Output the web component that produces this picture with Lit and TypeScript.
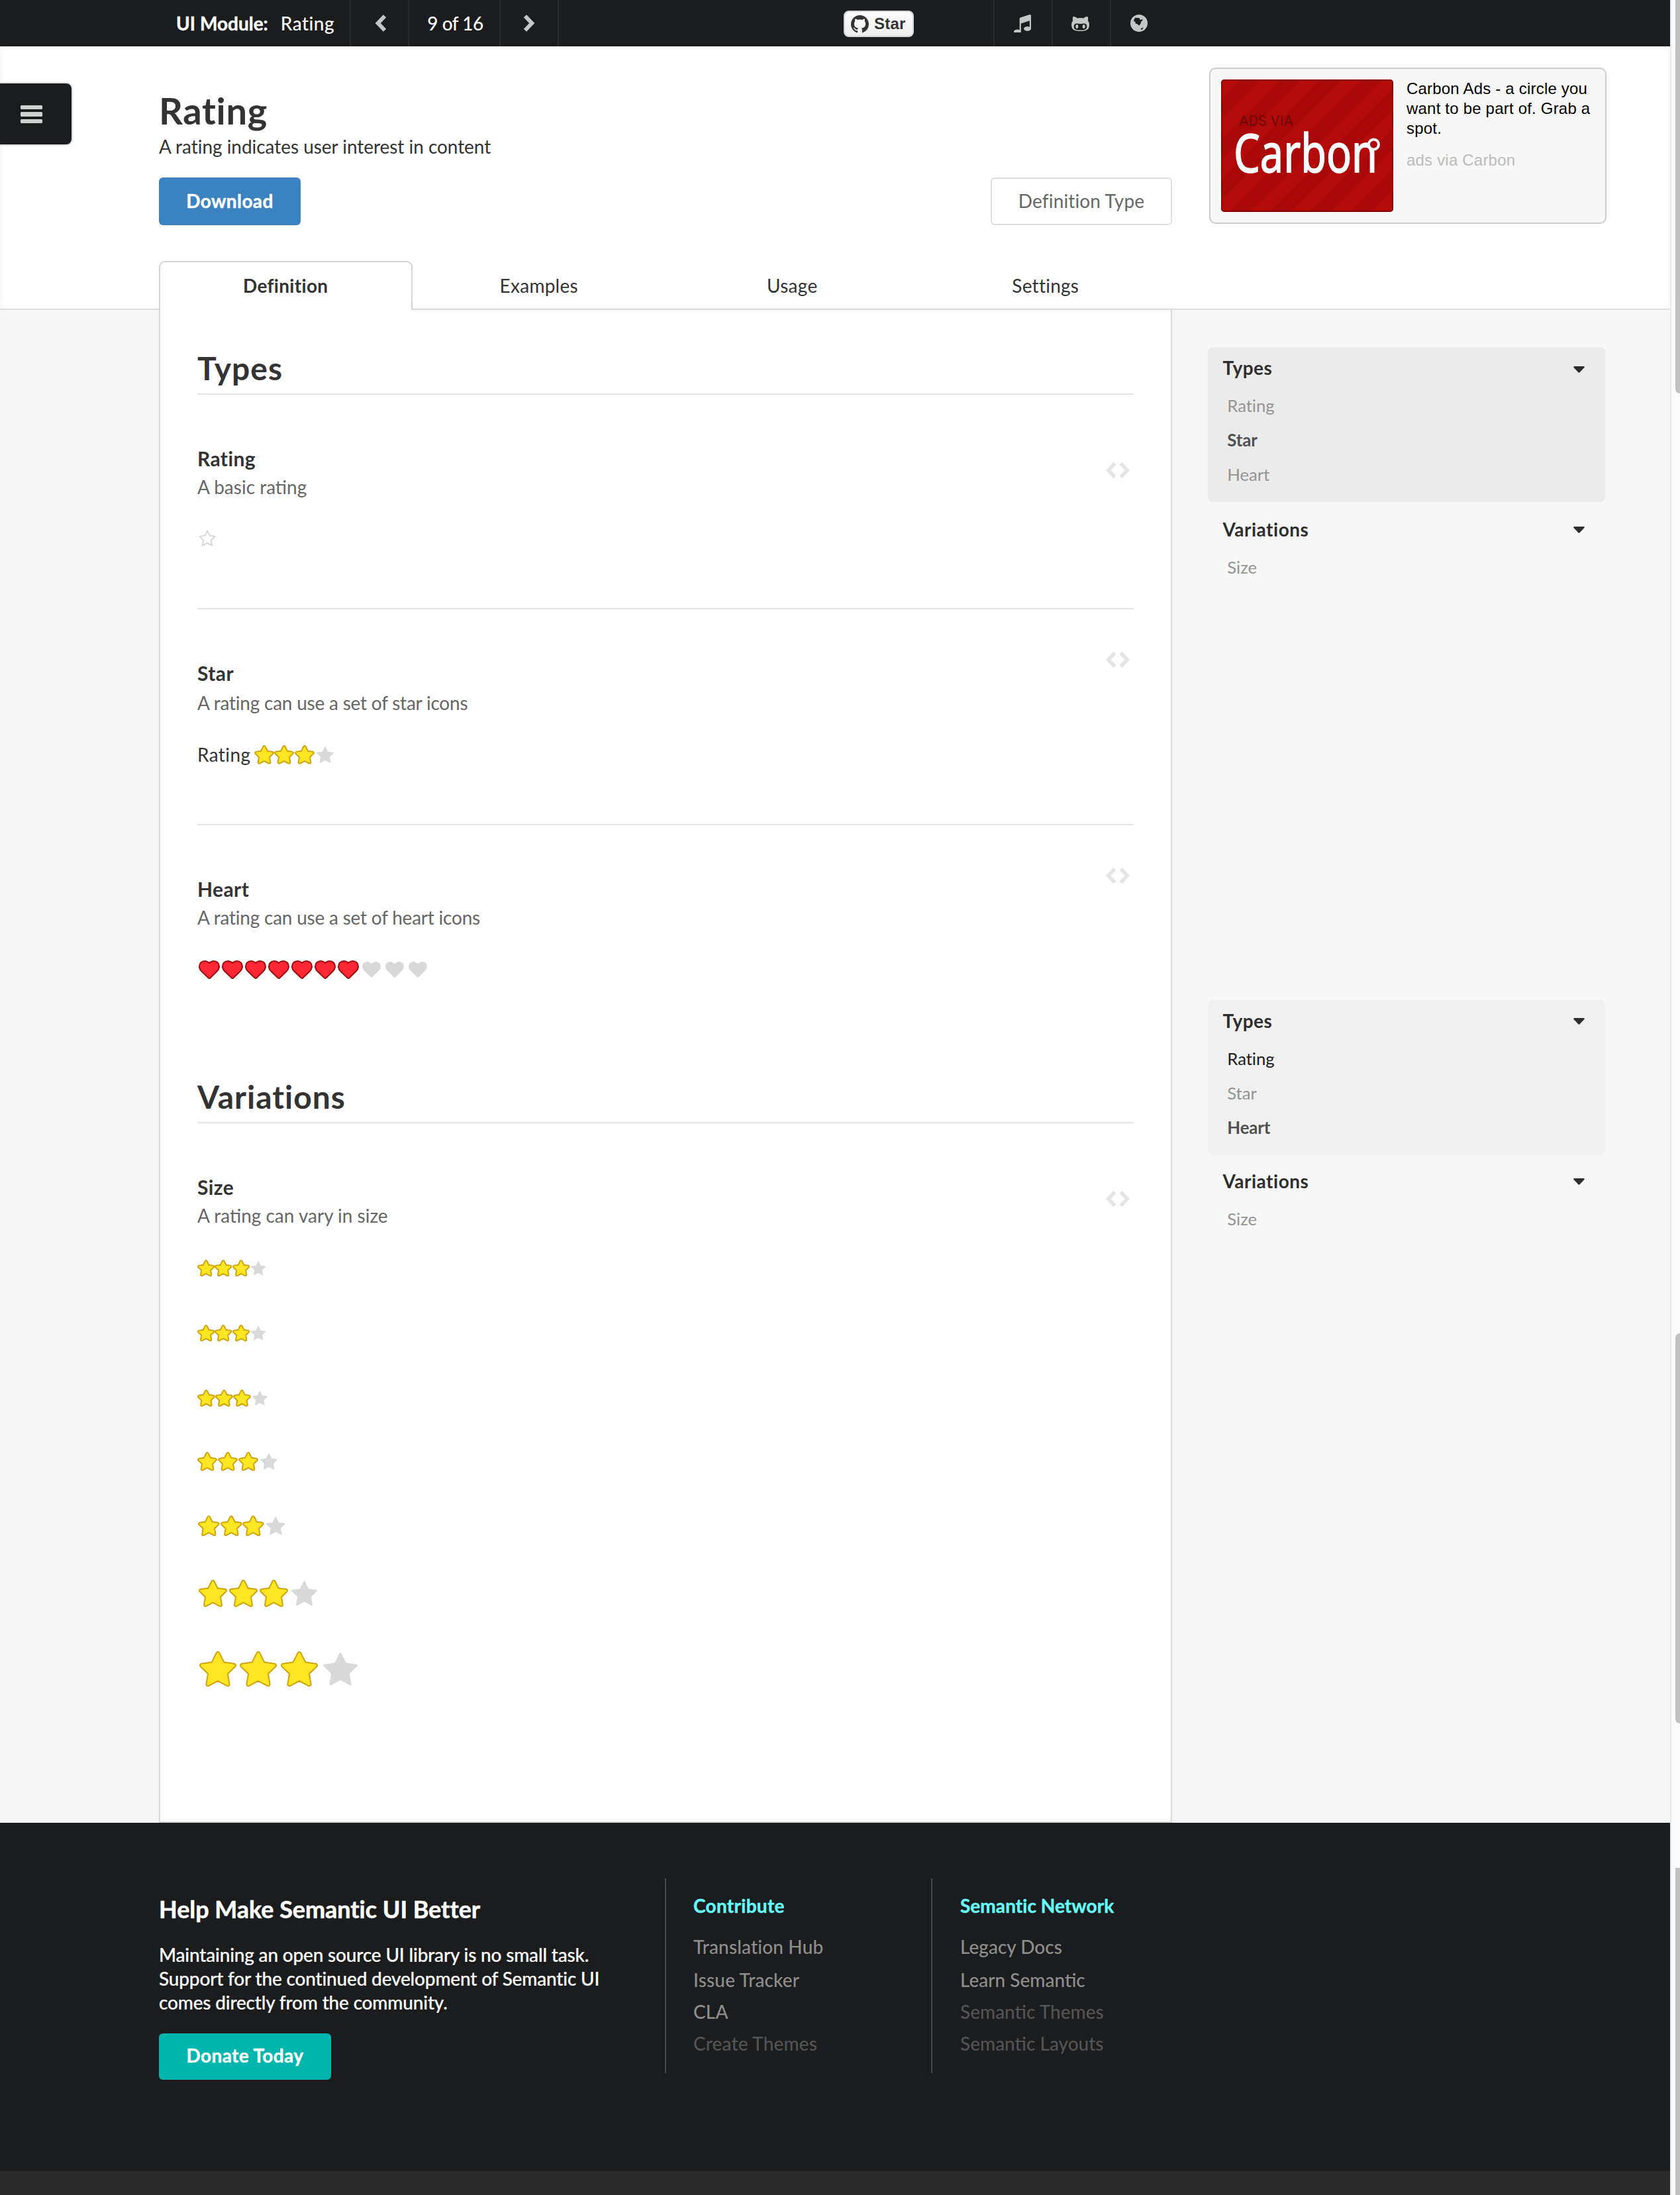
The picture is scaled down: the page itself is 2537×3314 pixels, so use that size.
import { LitElement, html, svg, css } from "lit";
import { customElement, property } from "lit/decorators.js";
import { classMap } from "lit/directives/class-map.js";
import { styleMap } from "lit/directives/style-map.js";

const STAR =
  "M1728 647q0 22-26 48l-363 354 86 500q1 7 1 20 0 21-10.5 35.5t-30.5 14.5q-19 0-40-12l-449-236-449 236q-22 12-40 12-21 0-31.5-14.5t-10.5-35.5q0-6 2-20l86-500-364-354q-25-27-25-48 0-37 56-46l502-73 225-455q19-41 49-41t49 41l225 455 502 73q56 9 56 46z";
const STAR_OUTLINE =
  "M1201 1004l306-297-422-62-189-382-189 382-422 62 306 297-73 421 378-199 377 199zm527-357q0 22-26 48l-363 354 86 500q1 7 1 20 0 50-41 50-19 0-40-12l-449-236-449 236q-22 12-40 12-21 0-31.5-14.5t-10.5-35.5q0-6 2-20l86-500-364-354q-25-27-25-48 0-37 56-46l502-73 225-455q19-41 49-41t49 41l225 455 502 73q56 9 56 46z";
const HEART =
  "M896 1664q-26 0-44-18l-624-602q-10-8-27.5-26t-55.5-65.5-68-97.5-53.5-121-23.5-138q0-220 127-344t351-124q62 0 126.5 21.5t120 58 95.5 68.5 76 68q36-36 76-68t95.5-68.5 120-58 126.5-21.5q224 0 351 124t127 344q0 221-229 450l-623 600q-18 18-44 18z";
const MUSIC =
  "M1664 224v1120q0 50-34 89t-86 60.5-103.5 32-96.5 10.5-96.5-10.5-103.5-32-86-60.5-34-89 34-89 86-60.5 103.5-32 96.5-10.5q105 0 192 39v-537l-768 237v709q0 50-34 89t-86 60.5-103.5 32-96.5 10.5-96.5-10.5-103.5-32-86-60.5-34-89 34-89 86-60.5 103.5-32 96.5-10.5q105 0 192 39v-967q0-31 19-56.5t49-35.5l832-256q12-4 28-4 40 0 68 28t28 68z";
const GITHUB_ALT =
  "M704 1216q0 40-12.5 82t-43 76-72.5 34-72.5-34-43-76-12.5-82 12.5-82 43-76 72.5-34 72.5 34 43 76 12.5 82zm640 0q0 40-12.5 82t-43 76-72.5 34-72.5-34-43-76-12.5-82 12.5-82 43-76 72.5-34 72.5 34 43 76 12.5 82zm160 0q0-120-69-204t-187-84q-41 0-195 21-71 11-157 11t-157-11q-152-21-195-21-118 0-187 84t-69 204q0 88 32 153.5t81 103 122 60 140 29.5 149 7h168q82 0 149-7t140-29.5 122-60 81-103 32-153.5zm224-176q0 207-61 331-38 77-105.5 133t-141 86-170 47.5-171.5 22-167 4.5q-78 0-142-3t-147.5-12.5-152.5-30-137-51.5-121-81-86-115q-62-123-62-331 0-237 136-396-27-82-27-170 0-116 51-218 108 0 190 39.5t189 123.5q147-35 309-35 148 0 280 32 105-82 187-121t189-39q51 102 51 218 0 87-27 168 136 160 136 398z";
const GITHUB_MARK =
  "M8 0C3.58 0 0 3.58 0 8c0 3.54 2.29 6.53 5.47 7.59.4.07.55-.17.55-.38 0-.19-.01-.82-.01-1.49-2.01.37-2.53-.49-2.69-.94-.09-.23-.48-.94-.82-1.13-.28-.15-.68-.52-.01-.53.63-.01 1.08.58 1.23.82.72 1.21 1.87.87 2.33.66.07-.52.28-.87.51-1.07-1.78-.2-3.64-.89-3.64-3.95 0-.87.31-1.59.82-2.15-.08-.2-.36-1.02.08-2.12 0 0 .67-.21 2.2.82.64-.18 1.32-.27 2-.27s1.36.09 2 .27c1.53-1.04 2.2-.82 2.2-.82.44 1.1.16 1.92.08 2.12.51.56.82 1.27.82 2.15 0 3.07-1.87 3.75-3.65 3.95.29.25.54.73.54 1.48 0 1.07-.01 1.93-.01 2.2 0 .21.15.46.55.38A8.01 8.01 0 0 0 16 8c0-4.42-3.58-8-8-8z";

/* A row of star or heart icons; cell pitch and glyph width follow the icon size. */
@customElement("ui-rating")
export class UiRating extends LitElement {
  @property() kind: "star" | "outline" | "heart" = "star";
  @property({ type: Number }) size = 28;
  @property({ type: Number }) value = 0;
  @property({ type: Number }) max = 1;

  static styles = css`
    :host {
      display: flex;
      align-items: center;
    }
    .cell {
      display: flex;
      justify-content: center;
      align-items: center;
      flex: none;
    }
    svg {
      display: block;
      overflow: visible;
      flex: none;
    }
    path {
      fill: #d9d9d9;
    }
    .on path {
      paint-order: stroke;
      stroke-width: 4px;
      stroke-linejoin: round;
      vector-effect: non-scaling-stroke;
      fill: #ffe623;
      stroke: #cfa30c;
    }
    .on.heart path {
      fill: #ff2733;
      stroke: #9c0a0e;
    }
  `;

  render() {
    const heart = this.kind === "heart";
    const w = heart ? this.size : this.size * 0.9286;
    const h = heart ? this.size * 0.857 : this.size * 0.886;
    const pitch = this.size * (heart ? 1.25 : 1.1);
    const box = heart ? "0 128 1792 1536" : "64 32 1664 1587";
    const d = heart ? HEART : this.kind === "outline" ? STAR_OUTLINE : STAR;
    return Array.from(
      { length: this.max },
      (_, i) => html`<span
        class=${classMap({ cell: true, on: i < this.value, heart })}
        style=${styleMap({ width: `${pitch}px` })}
        ><svg width=${w} height=${h} viewBox=${box}>${svg`<path d=${d}></path>`}</svg></span
      >`
    );
  }
}

interface Link {
  text: string;
  tone?: string;
}

@customElement("side-menu")
export class SideMenu extends LitElement {
  @property({ type: Array }) links: Link[] = [];
  @property({ type: Boolean, reflect: true }) light = false;

  static styles = css`
    :host {
      display: block;
      width: 600px;
    }
    .group {
      padding: 11px 0 16px;
      background: #ebebeb;
      border-radius: 8px;
    }
    :host([light]) .group {
      background: #f0f0f0;
    }
    .group.plain,
    :host([light]) .group.plain {
      background: none;
      padding: 21px 0 0;
    }
    :host([light]) .group.plain {
      padding-top: 19px;
    }
    .title {
      display: flex;
      justify-content: space-between;
      align-items: flex-start;
      padding: 0 31px 0 22.5px;
      font-weight: 700;
      line-height: 40px;
      letter-spacing: 0.5px;
      color: #2e2e2e;
    }
    .caret {
      display: block;
      margin-top: 17.6px;
    }
    .plain .caret,
    :host([light]) .caret {
      margin-top: 15.6px;
    }
    .links {
      display: flex;
      flex-direction: column;
      padding: 11px 0 0 29.3px;
      font-size: 25.76px;
      line-height: 52px;
      letter-spacing: -0.1px;
      color: #949494;
    }
    .active {
      color: #505050;
      font-weight: 700;
    }
    .hover {
      color: #1e1e1e;
    }
  `;

  private caret() {
    return html`<svg class="caret" width="17" height="10" viewBox="0 0 17 10">
      <path d="M1.2 0h14.6q1.6.6.6 2L9.3 9.4q-.8.8-1.6 0L.6 2Q-.4.6 1.2 0z" fill="#2e2e2e" />
    </svg>`;
  }

  render() {
    return html`
      <div class="group">
        <div class="title"><span>Types</span>${this.caret()}</div>
        <div class="links">
          ${this.links.map((l) => html`<span class=${l.tone ?? ""}>${l.text}</span>`)}
        </div>
      </div>
      <div class="group plain">
        <div class="title"><span>Variations</span>${this.caret()}</div>
        <div class="links"><span>Size</span></div>
      </div>
    `;
  }
}

const SIZES: { size: number; row: number }[] = [
  { size: 24, row: 98 },
  { size: 24, row: 98 },
  { size: 24.6, row: 98 },
  { size: 28, row: 94.4 },
  { size: 30.8, row: 98.4 },
  { size: 42, row: 107 },
  { size: 56, row: 120 },
];

@customElement("app-root")
export class AppRoot extends LitElement {
  static styles = css`
    :host {
      display: block;
      font-family: Lato, "Liberation Sans", sans-serif;
      font-size: 28px;
      color: #333;
    }
    * {
      box-sizing: border-box;
    }
    svg {
      display: block;
      flex: none;
    }
    h1,
    h2,
    h3,
    p {
      margin: 0;
    }
    .app {
      display: grid;
      grid-template-columns: 2522px 15px;
      height: 3314px;
      overflow: hidden;
    }
    .page {
      position: relative;
      display: flex;
      flex-direction: column;
    }
    .track {
      border-left: 2px solid #e8e8e8;
      background: #fafafa;
      padding-left: 6px;
      display: grid;
      grid-template-rows: 594px 1419px 589px 218px 494px;
      overflow: hidden;
    }
    .thumb {
      background: #c1c1c1;
      border-radius: 7px 0 0 7px;
    }
    .thumb.first {
      border-top-left-radius: 0;
      grid-row: 1;
    }
    .thumb.second {
      grid-row: 3;
    }
    .thumb.third {
      border-radius: 0;
      grid-row: 5;
    }

    .top {
      display: flex;
      height: 70px;
      background: #1b1c1d;
      color: #fff;
      line-height: 70px;
      font-weight: 500;
    }
    .cell {
      display: flex;
      justify-content: center;
      align-items: center;
      height: 70px;
      border-right: 2px solid #28292a;
    }
    .cell.name {
      width: 530px;
      padding-left: 266px;
      justify-content: flex-start;
      letter-spacing: 0.45px;
    }
    .name strong {
      font-weight: 700;
      letter-spacing: 0;
      margin-right: 19px;
      -webkit-text-stroke: 0.4px #fff;
    }
    .cell.step {
      width: 88px;
    }
    .cell.prev {
      padding-left: 2px;
    }
    .cell.count {
      width: 138px;
      padding-left: 3px;
      letter-spacing: -0.5px;
    }
    .github {
      display: flex;
      align-items: center;
      margin: 16px 120px 0 430px;
      width: 106px;
      height: 40px;
      padding-left: 9px;
      border: 2px solid #d5d5d5;
      border-radius: 8px;
      background: linear-gradient(#fcfcfc, #eee);
      color: #333;
      font: 700 24px/36px "Liberation Sans", Arial, sans-serif;
      letter-spacing: 0.2px;
      text-shadow: 0 2px 0 #fff;
      gap: 8px;
    }
    .cell.icon {
      width: 88px;
      padding-right: 3px;
      border-right: 0;
      border-left: 2px solid #28292a;
    }

    .menu-button {
      position: absolute;
      left: 0;
      top: 126px;
      width: 108px;
      height: 92px;
      background: #1b1c1d;
      border-radius: 0 8px 8px 0;
      box-shadow: 0 0 0 2px rgba(34, 36, 38, 0.15);
      display: flex;
      flex-direction: column;
      align-items: flex-start;
      justify-content: center;
      gap: 4px;
      padding: 1px 0 0 31px;
    }
    .bar {
      width: 33px;
      height: 6.5px;
      border-radius: 1.5px;
      background: #cfd0d0;
    }

    .header {
      display: flex;
      height: 398px;
      padding-left: 240px;
      background: #fff;
      border-bottom: 2px solid #dcddde;
      box-shadow: inset 0 0 8px rgba(0, 0, 0, 0.06);
    }
    .intro {
      width: 1530px;
      padding-top: 62px;
    }
    h1 {
      font-size: 56px;
      line-height: 70px;
      letter-spacing: 0.7px;
    }
    .lead {
      margin-top: 1px;
      line-height: 36px;
      letter-spacing: -0.04px;
    }
    .actions {
      display: flex;
      justify-content: space-between;
      margin-top: 29px;
    }
    .button {
      height: 72px;
      width: 214px;
      border-radius: 6px;
      text-align: center;
      line-height: 70px;
      font-weight: 700;
      letter-spacing: 0.4px;
      color: #fff;
      background: #3b83c0;
      -webkit-text-stroke: 0.4px #fff;
    }
    .button.basic {
      width: 274px;
      line-height: 66px;
      border: 2px solid #dddedf;
      background: #fff;
      color: #666;
      font-weight: 400;
      letter-spacing: 0.15px;
      -webkit-text-stroke: 0;
    }
    .tabs {
      display: grid;
      grid-template-columns: repeat(4, 382.5px);
      margin-top: 54px;
      height: 74px;
      line-height: 70px;
      text-align: center;
      letter-spacing: 0.25px;
      position: relative;
    }
    .tab {
      padding-top: 2px;
    }
    .tab.active {
      padding-top: 0;
      border: 2px solid #d4d4d5;
      border-bottom: 0;
      border-radius: 9px 9px 0 0;
      background: #fff;
      font-weight: 700;
      letter-spacing: 0.3px;
    }

    .ad {
      display: flex;
      width: 600px;
      height: 236px;
      margin: 32px 0 0 56px;
      padding: 16px;
      border: 2px solid #ccc;
      border-radius: 10px;
      background: #f7f7f7;
      font: 24px/30.3px "Liberation Sans", Arial, sans-serif;
      letter-spacing: 0.2px;
      color: #000;
    }
    .ad-image {
      flex: none;
      width: 260px;
      height: 200px;
      border-radius: 5px;
      overflow: hidden;
      background: repeating-linear-gradient(135deg, #b40a0a 0 21px, #a90808 21px 43px);
      box-shadow: inset 0 0 0 2px #860202;
    }
    .ad-word {
      font-family: "Noto Sans", "Open Sans", sans-serif;
      font-size: 81px;
      letter-spacing: 0;
      fill: #fff;
      stroke: #fff;
      stroke-width: 1.6px;
    }
    .ad-small {
      font-family: Roboto, sans-serif;
      font-size: 22px;
      letter-spacing: 0;
      fill: #6e0808;
    }
    .ad-text {
      margin: -1.5px 0 0 20px;
      width: 290px;
      flex: none;
    }
    .ad-via {
      margin-top: 17.2px;
      color: #bbb;
    }

    .body {
      display: flex;
      height: 2284px;
      padding-left: 240px;
      background: #f7f7f7;
    }
    .content {
      width: 1530px;
      padding: 57px 56px 0;
      background: #fff;
      border: 2px solid #d9dadb;
      border-top: 0;
      box-shadow: 0 0 8px rgba(0, 0, 0, 0.03);
    }
    .sidebar {
      display: flex;
      flex-direction: column;
      gap: 628px;
      padding: 56px 0 0 54px;
    }
    h2 {
      height: 71px;
      border-bottom: 2px solid #e3e3e3;
      font-size: 48px;
      line-height: 61px;
      letter-spacing: 1px;
    }
    .example + h2 {
      margin-top: 141px;
    }
    .example.second {
      border-top: 2px solid #e3e3e3;
      margin-top: 85.5px;
    }
    .example.third {
      border-top: 2px solid #e3e3e3;
      margin-top: 85px;
    }
    .head {
      display: flex;
      justify-content: space-between;
      align-items: flex-start;
      padding-right: 6px;
      height: 157px;
    }
    h3 {
      margin-top: 78px;
      font-size: 30px;
      line-height: 36px;
      letter-spacing: 0.4px;
    }
    .desc {
      margin-top: 7px;
      line-height: 36px;
      color: #666;
    }
    .second .head {
      height: 159px;
    }
    .second .desc {
      margin-top: 9px;
      letter-spacing: -0.22px;
    }
    .third .desc {
      letter-spacing: -0.22px;
    }
    .code {
      margin-top: 63px;
    }
    h2 + .example .code {
      margin-top: 101px;
    }
    .demo {
      display: flex;
      align-items: center;
      height: 40px;
      margin-top: 40px;
    }
    h2 + .example .demo {
      margin-top: 39.5px;
    }
    .third .demo {
      margin-top: 41px;
    }
    .label {
      width: 85.2px;
      line-height: 40px;
      letter-spacing: 0.4px;
    }
    .sizes {
      margin-top: 12.7px;
    }
    .size-row {
      display: flex;
      align-items: center;
    }

    .footer {
      display: flex;
      height: 526px;
      padding: 84px 0 0 240px;
      background: #1b1c1d;
      color: #fff;
    }
    .bottom {
      height: 36px;
      background: #2b2b2b;
    }
    .support {
      width: 764px;
      padding-top: 24px;
    }
    .support-title {
      font-size: 36px;
      line-height: 44px;
      font-weight: 700;
      letter-spacing: -0.05px;
      -webkit-text-stroke: 0.5px #fff;
    }
    .support-text {
      width: 690px;
      margin-top: 28.5px;
      line-height: 36.3px;
      font-weight: 500;
      letter-spacing: -0.18px;
      -webkit-text-stroke: 0.2px #fff;
    }
    .button.donate {
      width: 260px;
      height: 70px;
      margin-top: 28.6px;
      line-height: 66px;
      background: #00b5ad;
    }
    .column {
      display: flex;
      flex-direction: column;
      width: 402px;
      height: 294px;
      padding: 23px 0 0 41px;
      border-left: 2px solid #484949;
      line-height: 48px;
      font-weight: 500;
      letter-spacing: 0.15px;
      color: #8d8e8e;
    }
    .column + .column {
      padding-left: 42px;
      letter-spacing: 0;
    }
    .column-title {
      line-height: 36px;
      margin-bottom: 20px;
      font-weight: 700;
      letter-spacing: 0.3px;
      color: #66ffff;
      -webkit-text-stroke: 0.4px #66ffff;
    }
    .column + .column .column-title {
      letter-spacing: 0.05px;
    }
    .first-link {
      margin-bottom: 2px;
    }
    .off {
      color: #535454;
    }
  `;

  private chevron(next: boolean) {
    return html`<svg width="19" height="26" viewBox="0 0 19 26">
      <path
        d=${next ? "M3 2.2L13.2 13L3 23.8" : "M16 2.2L5.8 13L16 23.8"}
        fill="none"
        stroke="#c4c5c5"
        stroke-width="6"
        stroke-linejoin="miter"
      />
    </svg>`;
  }

  private codeIcon() {
    return html`<svg class="code" width="36" height="26" viewBox="0 0 36 26">
      <path
        d="M0 13L11.5 .5L15.3 4.8L7.4 13L15.3 21.2L11.5 25.5ZM36 13L24.5 .5L20.7 4.8L28.6 13L20.7 21.2L24.5 25.5Z"
        fill="#e5e5e5"
      />
    </svg>`;
  }

  private example(title: string, desc: string, demo: unknown, cls = "") {
    return html`<section class="example ${cls}">
      <div class="head">
        <div>
          <h3>${title}</h3>
          <p class="desc">${desc}</p>
        </div>
        ${this.codeIcon()}
      </div>
      ${demo}
    </section>`;
  }

  private column(title: string, links: [string, boolean][]) {
    return html`<div class="column">
      <div class="column-title">${title}</div>
      ${links.map(
        ([text, on], i) =>
          html`<span class=${classMap({ off: !on, "first-link": i === 0 })}>${text}</span>`
      )}
    </div>`;
  }

  private topBar() {
    return html`<nav class="top">
      <div class="cell name"><strong>UI Module:</strong><span>Rating</span></div>
      <div class="cell step prev">${this.chevron(false)}</div>
      <div class="cell count">9 of 16</div>
      <div class="cell step">${this.chevron(true)}</div>
      <div class="github">
        <svg width="27" height="27" viewBox="0 0 16 16"><path d=${GITHUB_MARK} fill="#333" /></svg>
        <span>Star</span>
      </div>
      <div class="cell icon">
        <svg width="26" height="27" viewBox="128 128 1536 1536" preserveAspectRatio="none">
          <path d=${MUSIC} fill="#c4c5c5" />
        </svg>
      </div>
      <div class="cell icon">
        <svg width="27" height="24" viewBox="64 128 1664 1536" preserveAspectRatio="none">
          <path d=${GITHUB_ALT} fill="#c4c5c5" />
        </svg>
      </div>
      <div class="cell icon">
        <svg width="26" height="26" viewBox="0 0 25 25">
          <circle cx="12.5" cy="12.5" r="12.5" fill="#c4c5c5" />
          <path
            d="M5 8L7 4.5L13 5L14.5 8L17.5 6.5V9L15.5 10L15 13L12.5 16L10.5 14L7.5 13L7 10L5 10ZM15 20.5L19 18.5L17.5 21.5L15.5 22Z"
            fill="#1b1c1d"
          />
        </svg>
      </div>
    </nav>`;
  }

  private ad() {
    return html`<aside class="ad">
      <div class="ad-image">
        <svg width="260" height="200" viewBox="0 0 260 200">
          <text class="ad-small" x="27" y="70" textLength="82" lengthAdjust="spacingAndGlyphs">ADS VIA</text>
          <g transform="translate(19 140) scale(0.778 1)">
            <text class="ad-word" x="0" y="0" textLength="279">Carbon</text>
          </g>
          <circle cx="230.5" cy="98" r="7.5" fill="#ad0909" stroke="#fff" stroke-width="4" />
        </svg>
      </div>
      <div class="ad-text">
        <div>Carbon Ads - a circle you want to be part of. Grab a spot.</div>
        <div class="ad-via">ads via Carbon</div>
      </div>
    </aside>`;
  }

  render() {
    return html`<div class="app">
      <div class="page">
        ${this.topBar()}
        <div class="menu-button">
          <span class="bar"></span><span class="bar"></span><span class="bar"></span>
        </div>
        <header class="header">
          <div class="intro">
            <h1>Rating</h1>
            <p class="lead">A rating indicates user interest in content</p>
            <div class="actions">
              <div class="button">Download</div>
              <div class="button basic">Definition Type</div>
            </div>
            <div class="tabs">
              ${["Definition", "Examples", "Usage", "Settings"].map(
                (t, i) => html`<div class=${classMap({ tab: true, active: i === 0 })}>${t}</div>`
              )}
            </div>
          </div>
          ${this.ad()}
        </header>
        <main class="body">
          <div class="content">
            <h2>Types</h2>
            ${this.example(
              "Rating",
              "A basic rating",
              html`<div class="demo"><ui-rating kind="outline"></ui-rating></div>`
            )}
            ${this.example(
              "Star",
              "A rating can use a set of star icons",
              html`<div class="demo">
                <span class="label">Rating</span><ui-rating value="3" max="4"></ui-rating>
              </div>`,
              "second"
            )}
            ${this.example(
              "Heart",
              "A rating can use a set of heart icons",
              html`<div class="demo"><ui-rating kind="heart" value="7" max="10"></ui-rating></div>`,
              "third"
            )}
            <h2>Variations</h2>
            ${this.example(
              "Size",
              "A rating can vary in size",
              html`<div class="sizes">
                ${SIZES.map(
                  (s) => html`<div class="size-row" style=${styleMap({ height: `${s.row}px` })}>
                    <ui-rating .size=${s.size} value="3" max="4"></ui-rating>
                  </div>`
                )}
              </div>`
            )}
          </div>
          <div class="sidebar">
            <side-menu
              .links=${[{ text: "Rating" }, { text: "Star", tone: "active" }, { text: "Heart" }]}
            ></side-menu>
            <side-menu
              light
              .links=${[
                { text: "Rating", tone: "hover" },
                { text: "Star" },
                { text: "Heart", tone: "active" },
              ]}
            ></side-menu>
          </div>
        </main>
        <footer class="footer">
          <div class="support">
            <div class="support-title">Help Make Semantic UI Better</div>
            <p class="support-text">
              Maintaining an open source UI library is no small task. Support for the continued
              development of Semantic UI comes directly from the community.
            </p>
            <div class="button donate">Donate Today</div>
          </div>
          ${this.column("Contribute", [
            ["Translation Hub", true],
            ["Issue Tracker", true],
            ["CLA", true],
            ["Create Themes", false],
          ])}
          ${this.column("Semantic Network", [
            ["Legacy Docs", true],
            ["Learn Semantic", true],
            ["Semantic Themes", false],
            ["Semantic Layouts", false],
          ])}
        </footer>
        <div class="bottom"></div>
      </div>
      <div class="track">
        <div class="thumb first"></div>
        <div class="thumb second"></div>
        <div class="thumb third"></div>
      </div>
    </div>`;
  }
}
